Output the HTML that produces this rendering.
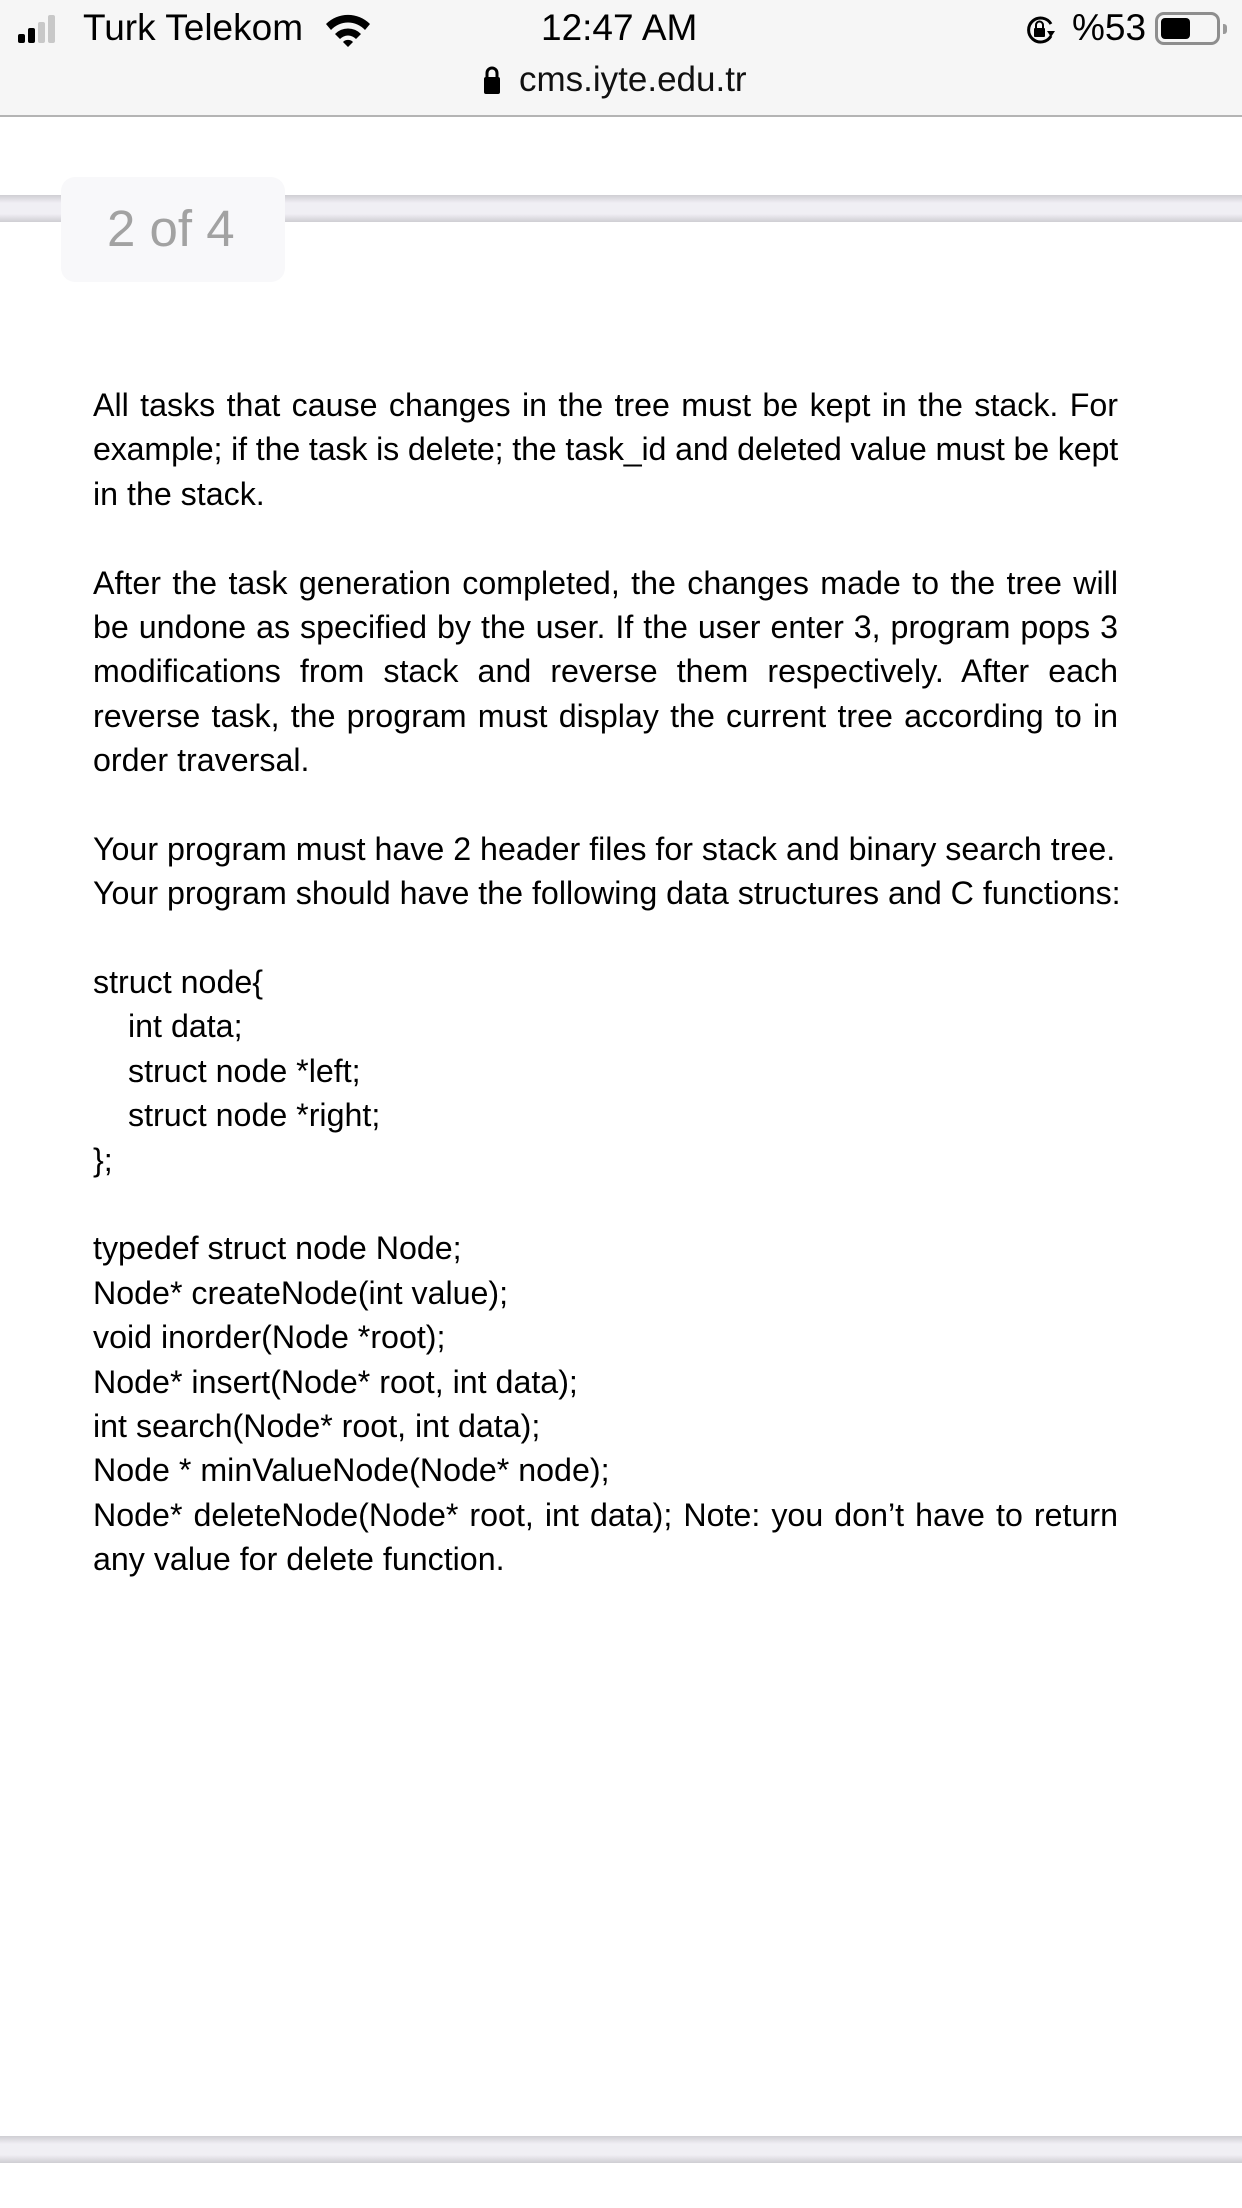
<!DOCTYPE html>
<html><head><meta charset="utf-8"><style>
*{margin:0;padding:0;box-sizing:border-box}
body{width:1242px;height:2208px;background:#fff;position:relative;overflow:hidden;font-family:"Liberation Sans",Arial,sans-serif;color:#000}
.sb{position:absolute;left:0;top:0;width:1242px;height:117px;background:#f6f6f6;border-bottom:2px solid #b4b4b4}
.t{position:absolute;white-space:nowrap;line-height:1}
.band{position:absolute;left:0;width:1242px;height:27px;background:linear-gradient(#cfced3,#f0eff4 30%,#f0eff4 70%,#cfced3)}
.pg{position:absolute;left:61px;top:177px;width:224px;height:105px;background:#f8f8fa;border-radius:14px}
.txt{position:absolute;left:93px;top:383px;width:1025px;font-size:32.2px;line-height:44.4px}
.txt div{height:44.4px;white-space:nowrap}
.j{text-align:justify;text-align-last:justify}
.in{padding-left:35px}
</style></head><body>
<div class="sb"></div>
<svg style="position:absolute;left:18px;top:14px" width="52" height="30"><rect x="0" y="20" width="7" height="9" rx="2"/><rect x="10" y="14" width="7" height="15" rx="2"/><rect x="20" y="8" width="7" height="21" rx="2" fill="#c8c8c8"/><rect x="30" y="1" width="7" height="28" rx="2" fill="#c8c8c8"/></svg>
<div class="t" style="left:83px;top:9px;font-size:37px">Turk Telekom</div>
<svg style="position:absolute;left:325px;top:13px" width="46" height="34" viewBox="0 0 46 34"><path d="M1 11 A31 31 0 0 1 45 11 L40 17 A23 23 0 0 0 6 17Z M10 21 A18 18 0 0 1 36 21 L31 26 A11 11 0 0 0 15 26Z M18 29 A7 7 0 0 1 28 29 L23 34Z"/></svg>
<div class="t" style="left:541px;top:9px;font-size:37px">12:47 AM</div>
<div class="t" style="left:1072px;top:9px;font-size:37px">%53</div>
<svg style="position:absolute;left:1024px;top:15px" width="32" height="30" viewBox="0 0 32 30"><path d="M27 9 A12 12 0 1 0 27 21" fill="none" stroke="#000" stroke-width="3"/><path d="M23 16 L31 16 L27 22Z"/><rect x="10" y="13" width="11" height="9" rx="1"/><path d="M12 13 V10 A3.5 3.5 0 0 1 19 10 V13" fill="none" stroke="#000" stroke-width="2"/></svg>
<div style="position:absolute;left:1155px;top:12px;width:65px;height:33px;border:3px solid #8e8e8e;border-radius:9px"></div>
<div style="position:absolute;left:1161px;top:18px;width:29px;height:21px;background:#000;border-radius:4px"></div>
<div style="position:absolute;left:1223px;top:24px;width:4px;height:10px;background:#9a9a9a;border-radius:0 3px 3px 0"></div>
<svg style="position:absolute;left:483px;top:65px" width="18" height="29" viewBox="0 0 18 29"><path d="M4 13 V8 A5 5 0 0 1 14 8 V13" fill="none" stroke="#000" stroke-width="3"/><rect x="1" y="12" width="16" height="17" rx="2"/></svg>
<div class="t" style="left:519px;top:62px;font-size:35px;color:#111">cms.iyte.edu.tr</div>
<div class="band" style="top:195px"></div>
<div class="pg"></div>
<div class="t" style="left:107px;top:203px;font-size:51px;color:#a2a2a2">2 of 4</div>
<div class="band" style="top:2136px"></div>
<div class="txt">
<div class="j">All tasks that cause changes in the tree must be kept in the stack. For</div>
<div class="j" style="letter-spacing:-0.16px;word-spacing:-0.5px">example; if the task is delete; the task_id and deleted value must be kept</div>
<div>in the stack.</div>
<div></div>
<div class="j">After the task generation completed, the changes made to the tree will</div>
<div class="j">be undone as specified by the user. If the user enter 3, program pops 3</div>
<div class="j">modifications from stack and reverse them respectively. After each</div>
<div class="j">reverse task, the program must display the current tree according to in</div>
<div>order traversal.</div>
<div></div>
<div>Your program must have 2 header files for stack and binary search tree.</div>
<div>Your program should have the following data structures and C functions:</div>
<div></div>
<div>struct node{</div>
<div class="in">int data;</div>
<div class="in">struct node *left;</div>
<div class="in">struct node *right;</div>
<div>};</div>
<div></div>
<div>typedef struct node Node;</div>
<div>Node* createNode(int value);</div>
<div>void inorder(Node *root);</div>
<div>Node* insert(Node* root, int data);</div>
<div>int search(Node* root, int data);</div>
<div>Node * minValueNode(Node* node);</div>
<div class="j">Node* deleteNode(Node* root, int data); Note: you don’t have to return</div>
<div>any value for delete function.</div>
</div>
</body></html>
